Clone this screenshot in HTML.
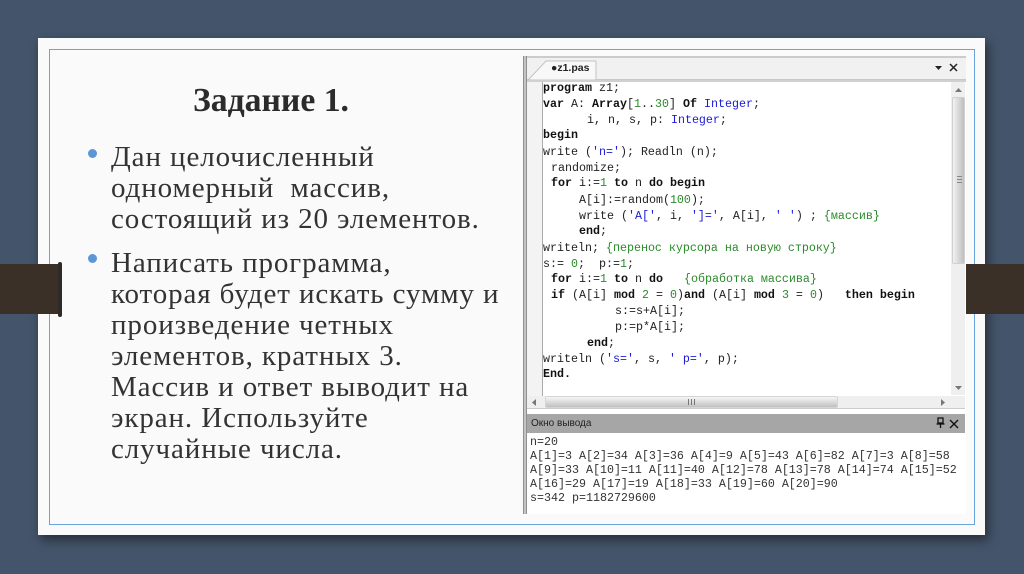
<!DOCTYPE html>
<html lang="ru"><head><meta charset="utf-8"><title>Задание 1</title>
<style>
html,body{margin:0;padding:0;width:1024px;height:574px;overflow:hidden;background:#44546a}
div{position:absolute;box-sizing:border-box}
.t{font-family:"Liberation Serif","Noto Serif CJK SC",serif;color:#333;white-space:pre;font-size:29px;line-height:31px;left:111px;letter-spacing:.9px}
.c,.o{font-family:"Liberation Mono","DejaVu Sans Mono",monospace;white-space:pre;color:#222;font-size:11.67px;line-height:14px;height:14px;filter:blur(.25px)}
.c b{color:#111}
.s{color:#1a1ad8}.n{color:#2a8a2a}.m{color:#2a8a2a}
.o{left:530px;color:#333}
.bl{width:9px;height:9px;border-radius:50%;background:#5b96d6;left:88px}
</style></head><body>
<div style="left:38px;top:38px;width:947px;height:497px;background:#fafafa;box-shadow:3px 5px 10px rgba(0,0,0,.45)"></div>
<div style="left:49px;top:49px;width:926px;height:476px;border:1px solid #69a4dc"></div>

<div class="t" style="left:193px;top:81px;font-size:33.7px;line-height:40px;font-weight:bold;color:#2b2b2b;letter-spacing:0">Задание 1.</div>
<div class="bl" style="top:149px"></div>
<div class="t" style="top:142px">Дан целочисленный
одномерный  массив,
состоящий из 20 элементов.</div>
<div class="bl" style="top:254px"></div>
<div class="t" style="top:248px">Написать программа,
которая будет искать сумму и
произведение четных
элементов, кратных 3.
Массив и ответ выводит на
экран. Используйте
случайные числа.</div>

<!-- editor -->
<div style="left:523px;top:56px;width:443px;height:458px;background:#fff"></div>
<div style="left:523px;top:56px;width:4px;height:458px;background:linear-gradient(90deg,#777,#ddd 50%,#777)"></div>
<div style="left:527px;top:56px;width:439px;height:2px;background:#ccc"></div>
<div style="left:527px;top:58px;width:439px;height:22px;background:#f1f1f1;border-bottom:1px solid #c8c8c8"></div>
<svg style="position:absolute;left:527px;top:58px" width="80" height="24"><path d="M2 21 L19 3 H69 V22 H2Z" fill="#f8f8f8" stroke="#c4c4c4"/></svg>
<div style="left:551px;top:62px;font:bold 10.500px/13px 'Liberation Sans',sans-serif;color:#222">●z1.pas</div>
<svg style="position:absolute;left:935px;top:62px" width="26" height="12"><path d="M0 4H7L3.5 8Z" fill="#222"/><path d="M15 2L22 9M22 2L15 9" stroke="#222" stroke-width="1.5" fill="none"/></svg>
<div style="left:527px;top:80px;width:439px;height:2px;background:#d0d0d0"></div>
<div style="left:527px;top:82px;width:16px;height:314px;background:#f3f3f3;border-right:1px solid #aaa"></div>
<!-- v scrollbar -->
<div style="left:951px;top:82px;width:14px;height:313px;background:#efefef"></div>
<div style="left:952px;top:97px;width:13px;height:167px;background:linear-gradient(90deg,#f2f2f2,#bfbfbf);border:1px solid #d0d0d0;border-radius:2px"></div>
<div style="left:957px;top:176px;width:5px;height:8px;background:repeating-linear-gradient(#888 0 1px,transparent 1px 3px)"></div>
<svg style="position:absolute;left:953px;top:85px" width="11" height="310"><path d="M2 7L5.500 3L9 7Z" fill="#777"/><path d="M2 301L5.500 305L9 301Z" fill="#777"/></svg>
<!-- h scrollbar -->
<div style="left:527px;top:396px;width:438px;height:13px;background:#efefef;border-bottom:1px solid #ccc"></div>
<div style="left:545px;top:396px;width:293px;height:12px;background:linear-gradient(#f6f6f6,#c0c0c0);border:1px solid #d4d4d4;border-radius:2px"></div>
<div style="left:688px;top:399px;width:8px;height:6px;background:repeating-linear-gradient(90deg,#777 0 1px,transparent 1px 3px)"></div>
<svg style="position:absolute;left:530px;top:397px" width="436" height="11"><path d="M6 2L2 5.500L6 9Z" fill="#777"/><path d="M411 2L415 5.500L411 9Z" fill="#777"/></svg>

<div class="c" style="left:543px;top:81px"><b>program</b> z1;</div>
<div class="c" style="left:543px;top:97px"><b>var</b> A: <b>Array</b>[<span class="n">1</span>..<span class="n">30</span>] <b>Of</b> <span class="s">Integer</span>;</div>
<div class="c" style="left:587px;top:113px">i, n, s, p: <span class="s">Integer</span>;</div>
<div class="c" style="left:543px;top:128px"><b>begin</b></div>
<div class="c" style="left:543px;top:145px">write (<span class="s">'n='</span>); Readln (n);</div>
<div class="c" style="left:551px;top:161px">randomize;</div>
<div class="c" style="left:551px;top:176px"><b>for</b> i:=<span class="n">1</span> <b>to</b> n <b>do</b> <b>begin</b></div>
<div class="c" style="left:579px;top:193px">A[i]:=random(<span class="n">100</span>);</div>
<div class="c" style="left:579px;top:209px">write (<span class="s">'A['</span>, i, <span class="s">']='</span>, A[i], <span class="s">' '</span>) ; <span class="m">{массив}</span></div>
<div class="c" style="left:579px;top:224px"><b>end</b>;</div>
<div class="c" style="left:543px;top:241px">writeln; <span class="m">{перенос курсора на новую строку}</span></div>
<div class="c" style="left:543px;top:257px">s:= <span class="n">0</span>;  p:=<span class="n">1</span>;</div>
<div class="c" style="left:551px;top:272px"><b>for</b> i:=<span class="n">1</span> <b>to</b> n <b>do</b>   <span class="m">{обработка массива}</span></div>
<div class="c" style="left:551px;top:288px"><b>if</b> (A[i] <b>mod</b> <span class="n">2</span> = <span class="n">0</span>)<b>and</b> (A[i] <b>mod</b> <span class="n">3</span> = <span class="n">0</span>)   <b>then begin</b></div>
<div class="c" style="left:615px;top:304px">s:=s+A[i];</div>
<div class="c" style="left:615px;top:320px">p:=p*A[i];</div>
<div class="c" style="left:587px;top:336px"><b>end</b>;</div>
<div class="c" style="left:543px;top:352px">writeln (<span class="s">'s='</span>, s, <span class="s">' p='</span>, p);</div>
<div class="c" style="left:543px;top:367px"><b>End.</b></div>

<!-- output -->
<div style="left:527px;top:414px;width:438px;height:19px;background:#a6a6a6"></div>
<div style="left:531px;top:416px;font:10px/15px 'Liberation Sans',sans-serif;color:#222">Окно вывода</div>
<svg style="position:absolute;left:935px;top:416px" width="30" height="14"><path d="M3 2H8V7H3ZM1.500 8H9.500M5.500 8V12" stroke="#111" stroke-width="1.300" fill="none"/><path d="M15 4L23 12M23 4L15 12" stroke="#111" stroke-width="1.400" fill="none"/></svg>
<div class="o" style="top:435px">n=20</div>
<div class="o" style="top:449px">A[1]=3 A[2]=34 A[3]=36 A[4]=9 A[5]=43 A[6]=82 A[7]=3 A[8]=58</div>
<div class="o" style="top:463px">A[9]=33 A[10]=11 A[11]=40 A[12]=78 A[13]=78 A[14]=74 A[15]=52</div>
<div class="o" style="top:477px">A[16]=29 A[17]=19 A[18]=33 A[19]=60 A[20]=90</div>
<div class="o" style="top:491px">s=342 p=1182729600</div>

<!-- bands -->
<div style="left:0;top:264px;width:61px;height:50px;background:#3a3028"></div>
<div style="left:58px;top:262px;width:4px;height:55px;background:#2e2a28;border-radius:2px"></div>
<div style="left:966px;top:264px;width:58px;height:50px;background:#3a3028"></div>
</body></html>
